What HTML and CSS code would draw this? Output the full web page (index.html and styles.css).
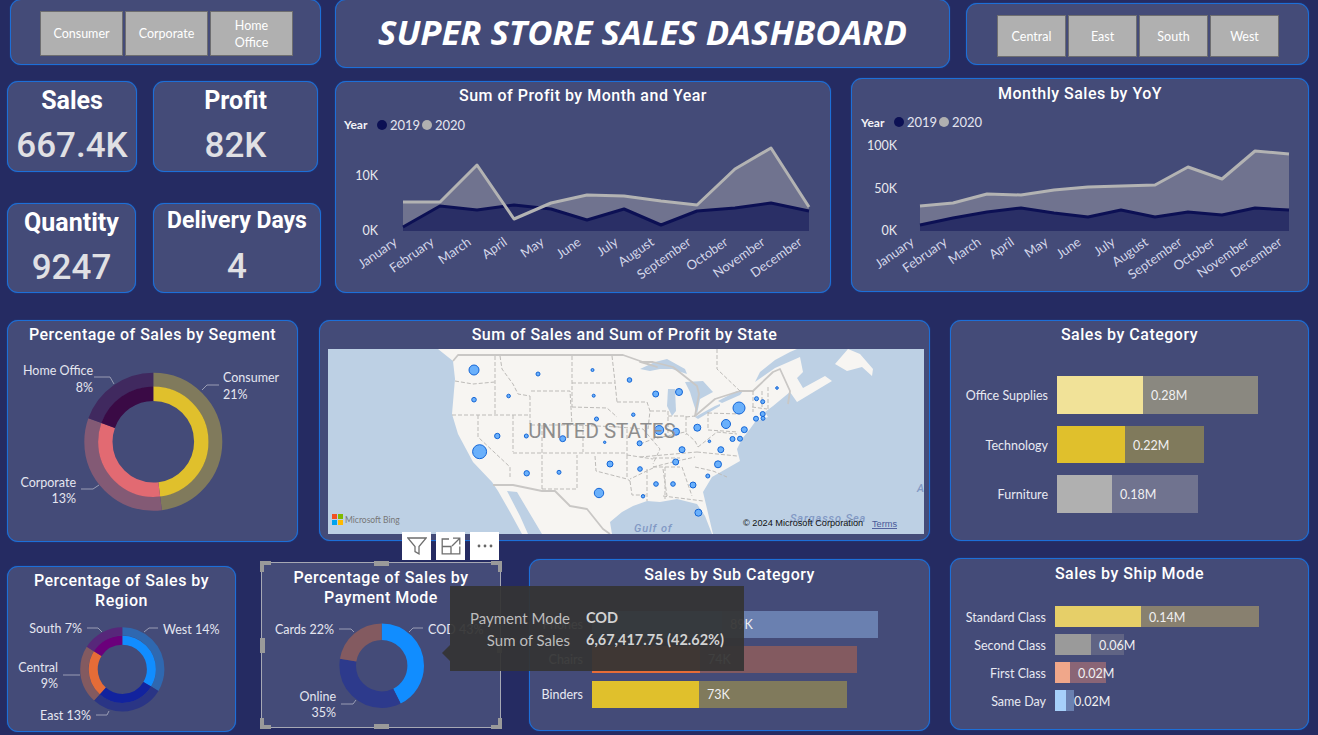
FILE: index.html
```html
<!DOCTYPE html>
<html lang="en">
<head>
<meta charset="utf-8">
<title>Super Store Sales Dashboard</title>
<link rel="stylesheet" href="styles.css">
</head>
<body>
<main class="dash">

<section class="row row-a">
  <div class="tile slicer slicer-seg">
    <button class="chip chip-seg">Consumer</button>
    <button class="chip chip-seg">Corporate</button>
    <button class="chip chip-seg">Home<br>Office</button>
  </div>
  <header class="tile banner"><h1>SUPER STORE SALES DASHBOARD</h1></header>
  <div class="tile slicer slicer-reg">
    <button class="chip chip-reg">Central</button>
    <button class="chip chip-reg">East</button>
    <button class="chip chip-reg">South</button>
    <button class="chip chip-reg">West</button>
  </div>
</section>

<section class="row row-b">
  <div class="kpis">
    <div class="tile kpi kpi-sales"><h3>Sales</h3><p>667.4K</p></div>
    <div class="tile kpi kpi-profit"><h3>Profit</h3><p>82K</p></div>
    <div class="tile kpi kpi-qty"><h3>Quantity</h3><p>9247</p></div>
    <div class="tile kpi kpi-days"><h3>Delivery Days</h3><p>4</p></div>
  </div>

  <article class="tile t-profit">
    <h2>Sum of Profit by Month and Year</h2>
    <svg class="chart" width="494" height="182" viewBox="336 110 494 182">
      <text class="lg-b" x="344" y="129">Year</text>
      <circle class="c19" cx="382" cy="125" r="5"/><text class="lg" x="390" y="130">2019</text>
      <circle class="c20" cx="427" cy="125" r="5"/><text class="lg" x="435" y="130">2020</text>
      <text class="ax" x="378" y="180">10K</text>
      <text class="ax" x="378" y="235">0K</text>
      <polygon class="a20" points="403,231 403,202 440,202 477,165 514,219 551,203 587,195 624,196 661,201 697,205 735,169 771,148 809,207 809,231"/>
      <polygon class="a19" points="403,231 403,227 440,206 477,210 514,205 551,209 587,220 624,209 661,225 697,211 735,208 771,203 809,211 809,231"/>
      <polyline class="l19" points="403,227 440,206 477,210 514,205 551,209 587,220 624,209 661,225 697,211 735,208 771,203 809,211"/>
      <polyline class="l20" points="403,202 440,202 477,165 514,219 551,203 587,195 624,196 661,201 697,205 735,169 771,148 809,207"/>
      <text class="mo" x="398" y="244" transform="rotate(-35 398 244)">January</text>
      <text class="mo" x="435" y="244" transform="rotate(-35 435 244)">February</text>
      <text class="mo" x="472" y="244" transform="rotate(-35 472 244)">March</text>
      <text class="mo" x="508" y="244" transform="rotate(-35 508 244)">April</text>
      <text class="mo" x="545" y="244" transform="rotate(-35 545 244)">May</text>
      <text class="mo" x="582" y="244" transform="rotate(-35 582 244)">June</text>
      <text class="mo" x="619" y="244" transform="rotate(-35 619 244)">July</text>
      <text class="mo" x="655" y="244" transform="rotate(-35 655 244)">August</text>
      <text class="mo" x="692" y="244" transform="rotate(-35 692 244)">September</text>
      <text class="mo" x="729" y="244" transform="rotate(-35 729 244)">October</text>
      <text class="mo" x="766" y="244" transform="rotate(-35 766 244)">November</text>
      <text class="mo" x="803" y="244" transform="rotate(-35 803 244)">December</text>
    </svg>
  </article>

  <article class="tile t-monthly">
    <h2>Monthly Sales by YoY</h2>
    <svg class="chart" width="456" height="184" viewBox="851 107 456 184">
      <text class="lg-b" x="860" y="127">Year</text>
      <circle class="c19" cx="898" cy="122" r="5"/><text class="lg" x="906" y="127">2019</text>
      <circle class="c20" cx="943" cy="122" r="5"/><text class="lg" x="951" y="127">2020</text>
      <text class="ax" x="896" y="150">100K</text>
      <text class="ax" x="896" y="193">50K</text>
      <text class="ax" x="896" y="235">0K</text>
      <polygon class="a20" points="919,231 919,206 952,203 986,194 1020,195 1053,190 1087,187 1120,186 1154,185 1187,167 1221,179 1254,151 1288,154 1288,231"/>
      <polygon class="a19" points="919,231 919,225 952,218 986,212 1020,208 1053,213 1087,217 1120,210 1154,217 1187,212 1221,215 1254,208 1288,210 1288,231"/>
      <polyline class="l19" points="919,225 952,218 986,212 1020,208 1053,213 1087,217 1120,210 1154,217 1187,212 1221,215 1254,208 1288,210"/>
      <polyline class="l20" points="919,206 952,203 986,194 1020,195 1053,190 1087,187 1120,186 1154,185 1187,167 1221,179 1254,151 1288,154"/>
      <text class="mo" x="914" y="244" transform="rotate(-35 914 244)">January</text>
      <text class="mo" x="947" y="244" transform="rotate(-35 947 244)">February</text>
      <text class="mo" x="981" y="244" transform="rotate(-35 981 244)">March</text>
      <text class="mo" x="1014" y="244" transform="rotate(-35 1014 244)">April</text>
      <text class="mo" x="1048" y="244" transform="rotate(-35 1048 244)">May</text>
      <text class="mo" x="1081" y="244" transform="rotate(-35 1081 244)">June</text>
      <text class="mo" x="1115" y="244" transform="rotate(-35 1115 244)">July</text>
      <text class="mo" x="1148" y="244" transform="rotate(-35 1148 244)">August</text>
      <text class="mo" x="1182" y="244" transform="rotate(-35 1182 244)">September</text>
      <text class="mo" x="1215" y="244" transform="rotate(-35 1215 244)">October</text>
      <text class="mo" x="1249" y="244" transform="rotate(-35 1249 244)">November</text>
      <text class="mo" x="1282" y="244" transform="rotate(-35 1282 244)">December</text>
    </svg>
  </article>
</section>

<section class="row row-c">
  <article class="tile t-seg">
    <h2>Percentage of Sales by Segment</h2>
    <svg class="chart" width="289" height="192" viewBox="8 349 289 192">
      <g class="donut" transform="rotate(-90 153.3 441.7)">
        <circle cx="153.3" cy="441.7" r="62" stroke-width="14" stroke="#807a5c" pathLength="100" stroke-dasharray="48 52"/>
        <circle cx="153.3" cy="441.7" r="62" stroke-width="14" stroke="#835a75" pathLength="100" stroke-dasharray="32.5 67.5" stroke-dashoffset="-48"/>
        <circle cx="153.3" cy="441.7" r="62" stroke-width="14" stroke="#40295f" pathLength="100" stroke-dasharray="19.5 80.5" stroke-dashoffset="-80.5"/>
        <circle cx="153.3" cy="441.7" r="48" stroke-width="14.4" stroke="#e0c02c" pathLength="100" stroke-dasharray="48 52"/>
        <circle cx="153.3" cy="441.7" r="48" stroke-width="14.4" stroke="#e26a72" pathLength="100" stroke-dasharray="32.5 67.5" stroke-dashoffset="-48"/>
        <circle cx="153.3" cy="441.7" r="48" stroke-width="14.4" stroke="#3a0a45" pathLength="100" stroke-dasharray="19.5 80.5" stroke-dashoffset="-80.5"/>
      </g>
      <polyline class="lead" points="94,377 110,377 114,384"/>
      <polyline class="lead" points="219,385 207,385 202,390"/>
      <polyline class="lead" points="81,489 93,489 99,485"/>
      <text class="dl end" x="93" y="375">Home Office</text>
      <text class="dl end" x="93" y="392">8%</text>
      <text class="dl" x="223" y="382">Consumer</text>
      <text class="dl" x="223" y="399">21%</text>
      <text class="dl end" x="76" y="487">Corporate</text>
      <text class="dl end" x="76" y="503">13%</text>
    </svg>
  </article>

  <article class="tile t-map">
    <h2>Sum of Sales and Sum of Profit by State</h2>
    <svg class="chart" width="596" height="185" viewBox="328 349 596 185">
      <rect class="water" x="328" y="349" width="596" height="185"/>
      <g class="map-base">
        <polygon class="land" points="438,349 453,361 455,379 452,414 458,434 473,462 492,482 498,491 510,512 522,534 612,534 610,522 622,512 633,506 647,501 660,502 677,499 697,504 705,516 712,534 713,534 703,492 712,477 740,461 737,449 742,439 750,429 755,422 768,417 765,412 773,406 790,392 797,402 832,381 825,376 803,388 797,378 803,372 800,357 775,368 755,382 760,372 775,360 790,352 797,349"/>
        <polygon class="land" points="835,364 848,349 860,354 873,369 872,376 862,367 847,371"/>
        <polygon class="water" points="507,491 517,492 542,534 528,534 520,516"/>
        <polygon class="lake" points="640,369 655,362 667,359 685,369 687,374 672,369 660,369 650,371"/>
        <polygon class="lake" points="668,389 675,389 676,411 672,416 667,406"/>
        <polygon class="lake" points="685,382 703,381 713,392 700,399 697,414 693,402 690,392"/>
        <polygon class="lake" points="695,417 715,406 720,404 720,406 698,419"/>
        <polygon class="lake" points="718,401 737,391 743,391 740,395 722,403"/>
        <polyline class="nation" points="453,361 458,355 623,355 657,367 640,362 653,362 673,367 697,386 699,394 695,416 715,399 740,391 753,391 773,372 780,369 790,391 788,404"/>
        <polyline class="nation" points="493,485 513,485 542,491 555,491 570,506 587,509 603,529 610,534"/>
        <path class="state" d="M455 381L473 384L495 382M495 356V414M500 356L502 369L513 384L518 394L530 396M452 415H530M531 391H570L572 425M530 396V425H573M572 383H615M572 356V407M572 407L607 408L617 417M612 356L615 382L617 402M617 402H647L650 411L648 429M618 427L643 429M573 425L620 427M583 425V452M513 415V452M542 425V489M513 453H627M478 415V437L510 467V477M542 489H577V455M595 456L596 471L627 479L630 481M627 455V477M627 429V455M627 455L653 459M643 429L660 449L653 464M630 481L632 495H647M653 468L630 479M647 469V501M665 467V499M653 458H680M653 467H680M650 411H668V437M668 416H686V435M686 417L695 416M708 412V430M708 413L740 414M708 430L738 432M640 444L653 439L667 436L685 432L695 441L698 447M640 457L697 452M697 452L737 456M653 467L673 462L695 457M695 467L713 471L727 477M663 469L667 496M682 467L692 496M663 496L703 501M753 391V412M762 391V407M768 387V409M752 407L767 409M698 447L717 432L737 434M717 349V369L740 391"/>
      </g>
      <g class="dots">
        <circle cx="474" cy="370" r="5"/><circle cx="538" cy="374" r="2"/><circle cx="592.5" cy="370" r="1.5"/><circle cx="629.5" cy="380" r="2.3"/><circle cx="655.7" cy="394" r="3"/><circle cx="679" cy="392" r="3.5"/><circle cx="777" cy="388" r="1.3"/><circle cx="739" cy="408" r="6"/><circle cx="756.5" cy="398.7" r="2"/><circle cx="762.7" cy="401.7" r="2"/><circle cx="762.7" cy="414" r="2.5"/><circle cx="763" cy="418.3" r="2"/><circle cx="756" cy="418.7" r="2.5"/><circle cx="474" cy="399.7" r="2.3"/><circle cx="508.6" cy="396" r="1.8"/><circle cx="593.7" cy="395.7" r="1.5"/><circle cx="633.3" cy="414.7" r="1.7"/><circle cx="596.5" cy="419" r="2"/><circle cx="659.2" cy="430" r="4.5"/><circle cx="676" cy="431.7" r="3.5"/><circle cx="697.3" cy="427.7" r="3.5"/><circle cx="726" cy="424" r="4.5"/><circle cx="744.3" cy="429.7" r="3"/><circle cx="740" cy="438.7" r="2.5"/><circle cx="732.5" cy="439" r="2.5"/><circle cx="720.8" cy="449.7" r="3"/><circle cx="709.4" cy="441.3" r="1.3"/><circle cx="682" cy="449.7" r="3"/><circle cx="675.7" cy="462" r="3"/><circle cx="718" cy="464.3" r="3.5"/><circle cx="707.8" cy="476" r="2"/><circle cx="693" cy="485" r="3"/><circle cx="673" cy="484" r="2.3"/><circle cx="656" cy="484" r="2.3"/><circle cx="643" cy="496.3" r="1.7"/><circle cx="640" cy="469" r="2.3"/><circle cx="639.6" cy="443.3" r="2.5"/><circle cx="604.7" cy="442.3" r="1.2"/><circle cx="610" cy="464" r="3"/><circle cx="599" cy="493" r="4.7"/><circle cx="559" cy="472.3" r="2"/><circle cx="526.7" cy="473.3" r="2.7"/><circle cx="526.3" cy="436" r="2"/><circle cx="562.7" cy="438.7" r="3"/><circle cx="497.3" cy="436" r="2.7"/><circle cx="479.6" cy="451.7" r="7"/><circle cx="698.4" cy="512.7" r="3.5"/>
      </g>
      <text class="m-us" x="602" y="438">UNITED STATES</text>
      <text class="m-sea" x="634" y="532">Gulf of</text>
      <text class="m-sea" x="790" y="522">Sargasso Sea</text>
      <text class="m-sea" x="917" y="492">A</text>
      <rect x="332" y="514" width="5" height="5" fill="#f25022"/>
      <rect x="338" y="514" width="5" height="5" fill="#7fba00"/>
      <rect x="332" y="520" width="5" height="5" fill="#00a4ef"/>
      <rect x="338" y="520" width="5" height="5" fill="#ffb900"/>
      <text class="m-bing" x="345" y="523">Microsoft Bing</text>
      <text class="m-copy" x="743" y="526">© 2024 Microsoft Corporation</text>
      <text class="m-terms" x="872" y="527">Terms</text>
    </svg>
  </article>

  <article class="tile t-cat">
    <h2>Sales by Category</h2>
    <div class="bars bars-cat">
      <div class="bar-row"><span class="bar-label">Office Supplies</span><div class="track" style="width:201px;background:#8a8880"><i style="width:86px;background:#f1e298"></i><b>0.28M</b></div></div>
      <div class="bar-row"><span class="bar-label">Technology</span><div class="track" style="width:147px;background:#807a5c"><i style="width:68px;background:#e0c02c"></i><b>0.22M</b></div></div>
      <div class="bar-row"><span class="bar-label">Furniture</span><div class="track" style="width:141px;background:#70738f"><i style="width:55px;background:#b0b0b0"></i><b>0.18M</b></div></div>
    </div>
  </article>
</section>

<section class="row row-d">
  <article class="tile t-reg">
    <h2 class="two">Percentage of Sales by<br>Region</h2>
    <svg class="chart" width="227" height="121" viewBox="8 610 227 121">
      <g class="donut" transform="rotate(-90 122.3 669.3)">
        <circle cx="122.3" cy="669.3" r="37.9" stroke-width="8.4" stroke="#2f68b0" pathLength="100" stroke-dasharray="33.6 66.4"/>
        <circle cx="122.3" cy="669.3" r="37.9" stroke-width="8.4" stroke="#2a3585" pathLength="100" stroke-dasharray="28.1 71.9" stroke-dashoffset="-33.6"/>
        <circle cx="122.3" cy="669.3" r="37.9" stroke-width="8.4" stroke="#835a60" pathLength="100" stroke-dasharray="22.3 77.7" stroke-dashoffset="-61.7"/>
        <circle cx="122.3" cy="669.3" r="37.9" stroke-width="8.4" stroke="#57277a" pathLength="100" stroke-dasharray="16 84" stroke-dashoffset="-84"/>
        <circle cx="122.3" cy="669.3" r="29.1" stroke-width="9" stroke="#118dff" pathLength="100" stroke-dasharray="33.6 66.4"/>
        <circle cx="122.3" cy="669.3" r="29.1" stroke-width="9" stroke="#12239e" pathLength="100" stroke-dasharray="28.1 71.9" stroke-dashoffset="-33.6"/>
        <circle cx="122.3" cy="669.3" r="29.1" stroke-width="9" stroke="#e66c37" pathLength="100" stroke-dasharray="22.3 77.7" stroke-dashoffset="-61.7"/>
        <circle cx="122.3" cy="669.3" r="29.1" stroke-width="9" stroke="#6b007b" pathLength="100" stroke-dasharray="16 84" stroke-dashoffset="-84"/>
      </g>
      <polyline class="lead" points="87,628 98,628 102,632"/>
      <polyline class="lead" points="158,628 149,628 144,632"/>
      <polyline class="lead" points="63,675 80,675"/>
      <polyline class="lead" points="96,715 107,715 109,711"/>
      <text class="dl end" x="82" y="633">South 7%</text>
      <text class="dl" x="163" y="634">West 14%</text>
      <text class="dl end" x="58" y="672">Central</text>
      <text class="dl end" x="58" y="688">9%</text>
      <text class="dl end" x="91" y="720">East 13%</text>
    </svg>
  </article>

  <article class="tile t-pay">
    <h2 class="two">Percentage of Sales by<br>Payment Mode</h2>
    <svg class="chart" width="238" height="120" viewBox="262 607 238 120">
      <g class="donut" transform="rotate(-90 381.7 665.7)">
        <circle cx="381.7" cy="665.7" r="34" stroke-width="16.6" stroke="#118dff" pathLength="100" stroke-dasharray="42.6 57.4"/>
        <circle cx="381.7" cy="665.7" r="34" stroke-width="16.6" stroke="#2d3a8c" pathLength="100" stroke-dasharray="35 65" stroke-dashoffset="-42.6"/>
        <circle cx="381.7" cy="665.7" r="34" stroke-width="16.6" stroke="#835a60" pathLength="100" stroke-dasharray="22.4 77.6" stroke-dashoffset="-77.6"/>
      </g>
      <polyline class="lead" points="339,629 351,629 354,632"/>
      <polyline class="lead" points="423,628 413,628 409,632"/>
      <polyline class="lead" points="341,704 353,704 356,700"/>
      <text class="dl end" x="334" y="634">Cards 22%</text>
      <text class="dl" x="428" y="634">COD 43%</text>
      <text class="dl end" x="336" y="701">Online</text>
      <text class="dl end" x="336" y="717">35%</text>
    </svg>

    <div class="handle h-tl"></div><div class="handle h-tr"></div><div class="handle h-bl"></div><div class="handle h-br"></div>
    <div class="handle h-t"></div><div class="handle h-b"></div><div class="handle h-l"></div><div class="handle h-r"></div>

    <div class="vis-head">
      <span class="vh-btn vh-filter"><svg width="20" height="18" viewBox="0 0 20 18"><path d="M.8 1H19.2L12 9.5V16.8L8 14.5V9.5Z"/></svg></span>
      <span class="vh-btn vh-expand"><svg width="20" height="18" viewBox="0 0 20 18"><path d="M8 2H1.2V16.8H18.8V9.5M1.2 9.5H10V16.8M12 1.2H18.8V7.5M18.8 1.2L11 9"/></svg></span>
      <span class="vh-btn vh-more"><svg width="18" height="18" viewBox="0 0 18 18"><circle cx="3" cy="9" r="1.4"/><circle cx="9" cy="9" r="1.4"/><circle cx="15" cy="9" r="1.4"/></svg></span>
    </div>

    <div class="tooltip">
      <span class="tt-k">Payment Mode</span><span class="tt-v">COD</span>
      <span class="tt-k">Sum of Sales</span><span class="tt-v">6,67,417.75 (42.62%)</span>
    </div>
  </article>

  <article class="tile t-sub">
    <h2>Sales by Sub Category</h2>
    <div class="bars bars-sub">
      <div class="bar-row"><span class="bar-label">Phones</span><div class="track" style="width:286px;background:#6a80b0"><i style="width:130px;background:#5a93d8"></i><b>89K</b></div></div>
      <div class="bar-row"><span class="bar-label">Chairs</span><div class="track" style="width:265px;background:#835a60"><i style="width:108px;background:#e66c37"></i><b>74K</b></div></div>
      <div class="bar-row"><span class="bar-label">Binders</span><div class="track" style="width:255px;background:#807a5c"><i style="width:107px;background:#e0c02c"></i><b>73K</b></div></div>
    </div>
  </article>

  <article class="tile t-ship">
    <h2>Sales by Ship Mode</h2>
    <div class="bars bars-ship">
      <div class="bar-row"><span class="bar-label">Standard Class</span><div class="track" style="width:204px;background:#88806f"><i style="width:86px;background:#e6cf68"></i><b>0.14M</b></div></div>
      <div class="bar-row"><span class="bar-label">Second Class</span><div class="track" style="width:69px;background:#606484"><i style="width:36px;background:#9a9a9a"></i><b>0.06M</b></div></div>
      <div class="bar-row"><span class="bar-label">First Class</span><div class="track" style="width:51px;background:#8a6576"><i style="width:15px;background:#f0a78a"></i><b>0.02M</b></div></div>
      <div class="bar-row"><span class="bar-label">Same Day</span><div class="track" style="width:19px;background:#6a80b0"><i style="width:11px;background:#a6d0fa"></i><b>0.02M</b></div></div>
    </div>
  </article>
</section>

</main>
</body>
</html>
```
FILE: styles.css
```css
* { box-sizing: border-box; }
html, body { margin: 0; padding: 0; }
body {
  width: 1318px;
  height: 735px;
  overflow: hidden;
  background: #252b62;
  font-family: Lato, "Open Sans", sans-serif;
  color: #fff;
}
h1, h2, h3, p { margin: 0; }

.dash { display: flex; flex-direction: column; }
.row { display: flex; align-items: flex-start; }
.row-a { height: 78px; }
.row-b { height: 242px; }
.row-c { height: 238px; }
.row-d { height: 177px; }

.tile {
  position: relative;
  flex: none;
  background: #444b78;
  border: 1px solid #1d6fd8;
  border-radius: 11px;
  box-shadow: 0 0 1px #1d6fd8;
}
.tile > h2 {
  height: 28px;
  font-family: Roboto, sans-serif;
  font-weight: 500;
  font-size: 16px;
  letter-spacing: .5px;
  line-height: 28px;
  text-align: center;
  white-space: nowrap;
}
.tile > h2.two { height: 43px; padding-top: 4px; line-height: 20px; }
.t-monthly > h2, .t-sub > h2, .t-ship > h2 { padding-top: 1px; }
.chart { display: block; }

/* Row A */
.slicer { display: flex; align-items: flex-start; gap: 2px; }
.slicer-seg { margin-left: 10px; margin-top: -1px; width: 311px; height: 66px; padding: 11px 0 0 29px; }
.slicer-reg { margin-left: 16px; margin-top: 3px; width: 343px; height: 62px; padding: 11px 0 0 30px; gap: 2px; }
.chip {
  flex: none;
  font-family: Lato, sans-serif;
  font-size: 12.5px;
  line-height: 17px;
  color: #fff;
  background: #b0b0b0;
  border: 1.5px solid #6e6e70;
  padding: 0;
}
.chip-seg { width: 83px; height: 45px; }
.chip-reg { width: 69px; height: 42px; font-size: 12.5px; }
.banner {
  margin-left: 14px;
  margin-top: -1px;
  width: 615px;
  height: 69px;
  padding-bottom: 4px;
  display: flex;
  align-items: center;
  justify-content: center;
}
.banner h1 {
  font-family: "Open Sans", sans-serif;
  font-style: italic;
  font-weight: 700;
  font-size: 34.7px;
  white-space: nowrap;
}

/* KPI */
.kpis {
  margin-left: 7px;
  margin-top: 3px;
  width: 314px;
  display: grid;
  grid-template-columns: 146px 168px;
  grid-template-rows: 122px 90px;
}
.kpi { height: 91px; text-align: center; padding-top: 4px; }
.kpi h3 {
  font-family: Roboto, sans-serif;
  font-weight: 700;
  font-size: 25px;
  line-height: 30px;
  white-space: nowrap;
}
.kpi p {
  font-family: Roboto, sans-serif;
  font-weight: 500;
  font-size: 35px;
  line-height: 42px;
  margin-top: 9px;
  color: #e0e0e4;
}
.kpi-sales { width: 130px; }
.kpi-profit { width: 165px; }
.kpi-qty { width: 129px; height: 90px; }
.kpi-days { width: 168px; height: 90px; padding-top: 1px; }
.kpi-days h3 { font-size: 23px; line-height: 32px; }

.t-profit { margin-left: 14px; margin-top: 3px; width: 496px; height: 212px; }
.t-monthly { margin-left: 20px; width: 458px; height: 214px; }

/* Row C */
.t-seg { margin-left: 7px; width: 291px; height: 222px; }
.t-map { margin-left: 21px; width: 611px; height: 221px; padding: 0 8px; }
.t-cat { margin-left: 20px; width: 359px; height: 221px; }

/* Row D */
.t-reg { margin-left: 7px; margin-top: 8px; width: 229px; height: 166px; }
.t-pay {
  z-index: 5;
  margin-left: 25px;
  margin-top: 4px;
  width: 240px;
  height: 166px;
  border-radius: 0;
  border-color: #a6a8b4;
  box-shadow: none;
}
.t-pay > h2.two { height: 44px; padding-top: 5px; }
.t-sub { margin-left: 28px; margin-top: 1px; width: 401px; height: 172px; }
.t-ship { margin-left: 20px; width: 359px; height: 172px; }

/* Charts */
.lg-b { font: 700 12px Lato, sans-serif; fill: #f2f2f6; }
.lg { font: 13px Lato, sans-serif; fill: #e4e6f0; }
.c19 { fill: #0c1054; }
.c20 { fill: #b0b0b0; }
.ax { font: 12.5px Lato, sans-serif; fill: #e8e8ee; text-anchor: end; }
.mo { font: 13px Lato, sans-serif; fill: #d4d7ea; text-anchor: end; }
.a20 { fill: #70738f; }
.a19 { fill: #2a2f66; }
.l19, .l20 { fill: none; stroke-width: 3; stroke-linejoin: round; }
.l19 { stroke: #0c1054; }
.l20 { stroke: #b3b3b3; }

.donut circle { fill: none; }
.lead { fill: none; stroke: #9a9db4; stroke-width: 1; }
.dl { font: 12.5px Lato, sans-serif; fill: #e4e6f0; }
.dl.end { text-anchor: end; }

/* Map */
.map-base { filter: blur(.4px); }
.water { fill: #bdd0e4; }
.land { fill: #f7f5f2; }
.lake { fill: #bdd0e4; }
.nation { fill: none; stroke: #c9c7c5; stroke-width: 1.8; stroke-linejoin: round; }
.state { fill: none; stroke: #bdbbb8; stroke-width: 1; stroke-dasharray: 4 2; }
.dots circle { fill: #6ab0fb; stroke: #1566d6; stroke-width: 1; }
.m-us { font: 20.5px Roboto, sans-serif; fill: #8d8d8d; text-anchor: middle; }
.m-sea { font: italic 500 11px Roboto, sans-serif; fill: #8299c4; letter-spacing: .9px; }
.m-bing { font: 8.5px Lato, sans-serif; fill: #777; }
.m-copy { font: 9.2px "Liberation Sans", sans-serif; fill: #111; }
.m-terms { font: 9.2px "Liberation Sans", sans-serif; fill: #4a5a99; text-decoration: underline; }

/* Bars */
.bars { display: flex; flex-direction: column; }
.bar-row { display: flex; align-items: stretch; }
.bar-label {
  flex: none;
  display: flex;
  align-items: center;
  justify-content: flex-end;
  margin-right: 9px;
  font-size: 12.5px;
  color: #e8e9f2;
  white-space: nowrap;
}
.track { display: flex; align-items: center; flex: none; white-space: nowrap; }
.track i { display: block; align-self: stretch; flex: none; }
.track b { font-weight: 400; font-size: 12.5px; padding-left: 8px; color: #f0f0f2; }

.bars-cat { padding-top: 27px; gap: 12px; }
.bars-cat .bar-row { height: 37.5px; }
.bars-cat .bar-label { width: 97px; padding-top: 2px; }
.bars-cat .track b { padding-top: 2px; }
.bars-sub { padding-top: 23px; gap: 8px; }
.bars-sub .bar-row { height: 27px; }
.bars-sub .bar-label { width: 53px; }
.bars-ship { padding-top: 19px; gap: 6.7px; }
.bars-ship .bar-row { height: 21.3px; }
.bars-ship .bar-label { width: 95px; padding-top: 2px; }
.bars-ship .track b { padding-top: 2px; }

/* Selection chrome */
.handle { position: absolute; background: #9a9a9a; }
.h-t, .h-b { width: 15px; height: 5px; left: 112px; }
.h-t { top: -2px; }
.h-b { bottom: -2px; }
.h-l, .h-r { width: 5px; height: 15px; top: 75px; }
.h-l { left: -2px; }
.h-r { right: -2px; }
.h-tl, .h-tr, .h-bl, .h-br { width: 11px; height: 11px; background: none; border: 0 solid #9a9a9a; }
.h-tl { left: -2px; top: -2px; border-width: 4px 0 0 4px; }
.h-tr { right: -2px; top: -2px; border-width: 4px 4px 0 0; }
.h-bl { left: -2px; bottom: -2px; border-width: 0 0 4px 4px; }
.h-br { right: -2px; bottom: -2px; border-width: 0 4px 4px 0; }

.vis-head { position: absolute; left: 140px; top: -31px; display: flex; gap: 5px; }
.vh-btn {
  display: flex;
  align-items: center;
  justify-content: center;
  width: 29px;
  height: 28px;
  background: #fff;
}
.vh-btn path { fill: none; stroke: #6e6e6e; stroke-width: 1.3; }
.vh-btn circle { fill: #666; }

.tooltip {
  position: absolute;
  left: 188px;
  top: 23px;
  width: 294px;
  height: 85px;
  padding: 21px 0 0 20px;
  display: grid;
  grid-template-columns: 100px auto;
  column-gap: 16px;
  align-content: start;
  background: rgba(52, 52, 52, .94);
  font: 14.5px/22px Lato, sans-serif;
}
.tooltip::before {
  content: "";
  position: absolute;
  left: -8px;
  top: 59px;
  border: 8px solid transparent;
  border-left: 0;
  border-right-color: rgba(52, 52, 52, .94);
}
.tt-k { color: #bdbdbd; font-size: 15px; text-align: right; white-space: nowrap; }
.tt-v { color: #d2d2d2; font-weight: 700; white-space: nowrap; }
```
